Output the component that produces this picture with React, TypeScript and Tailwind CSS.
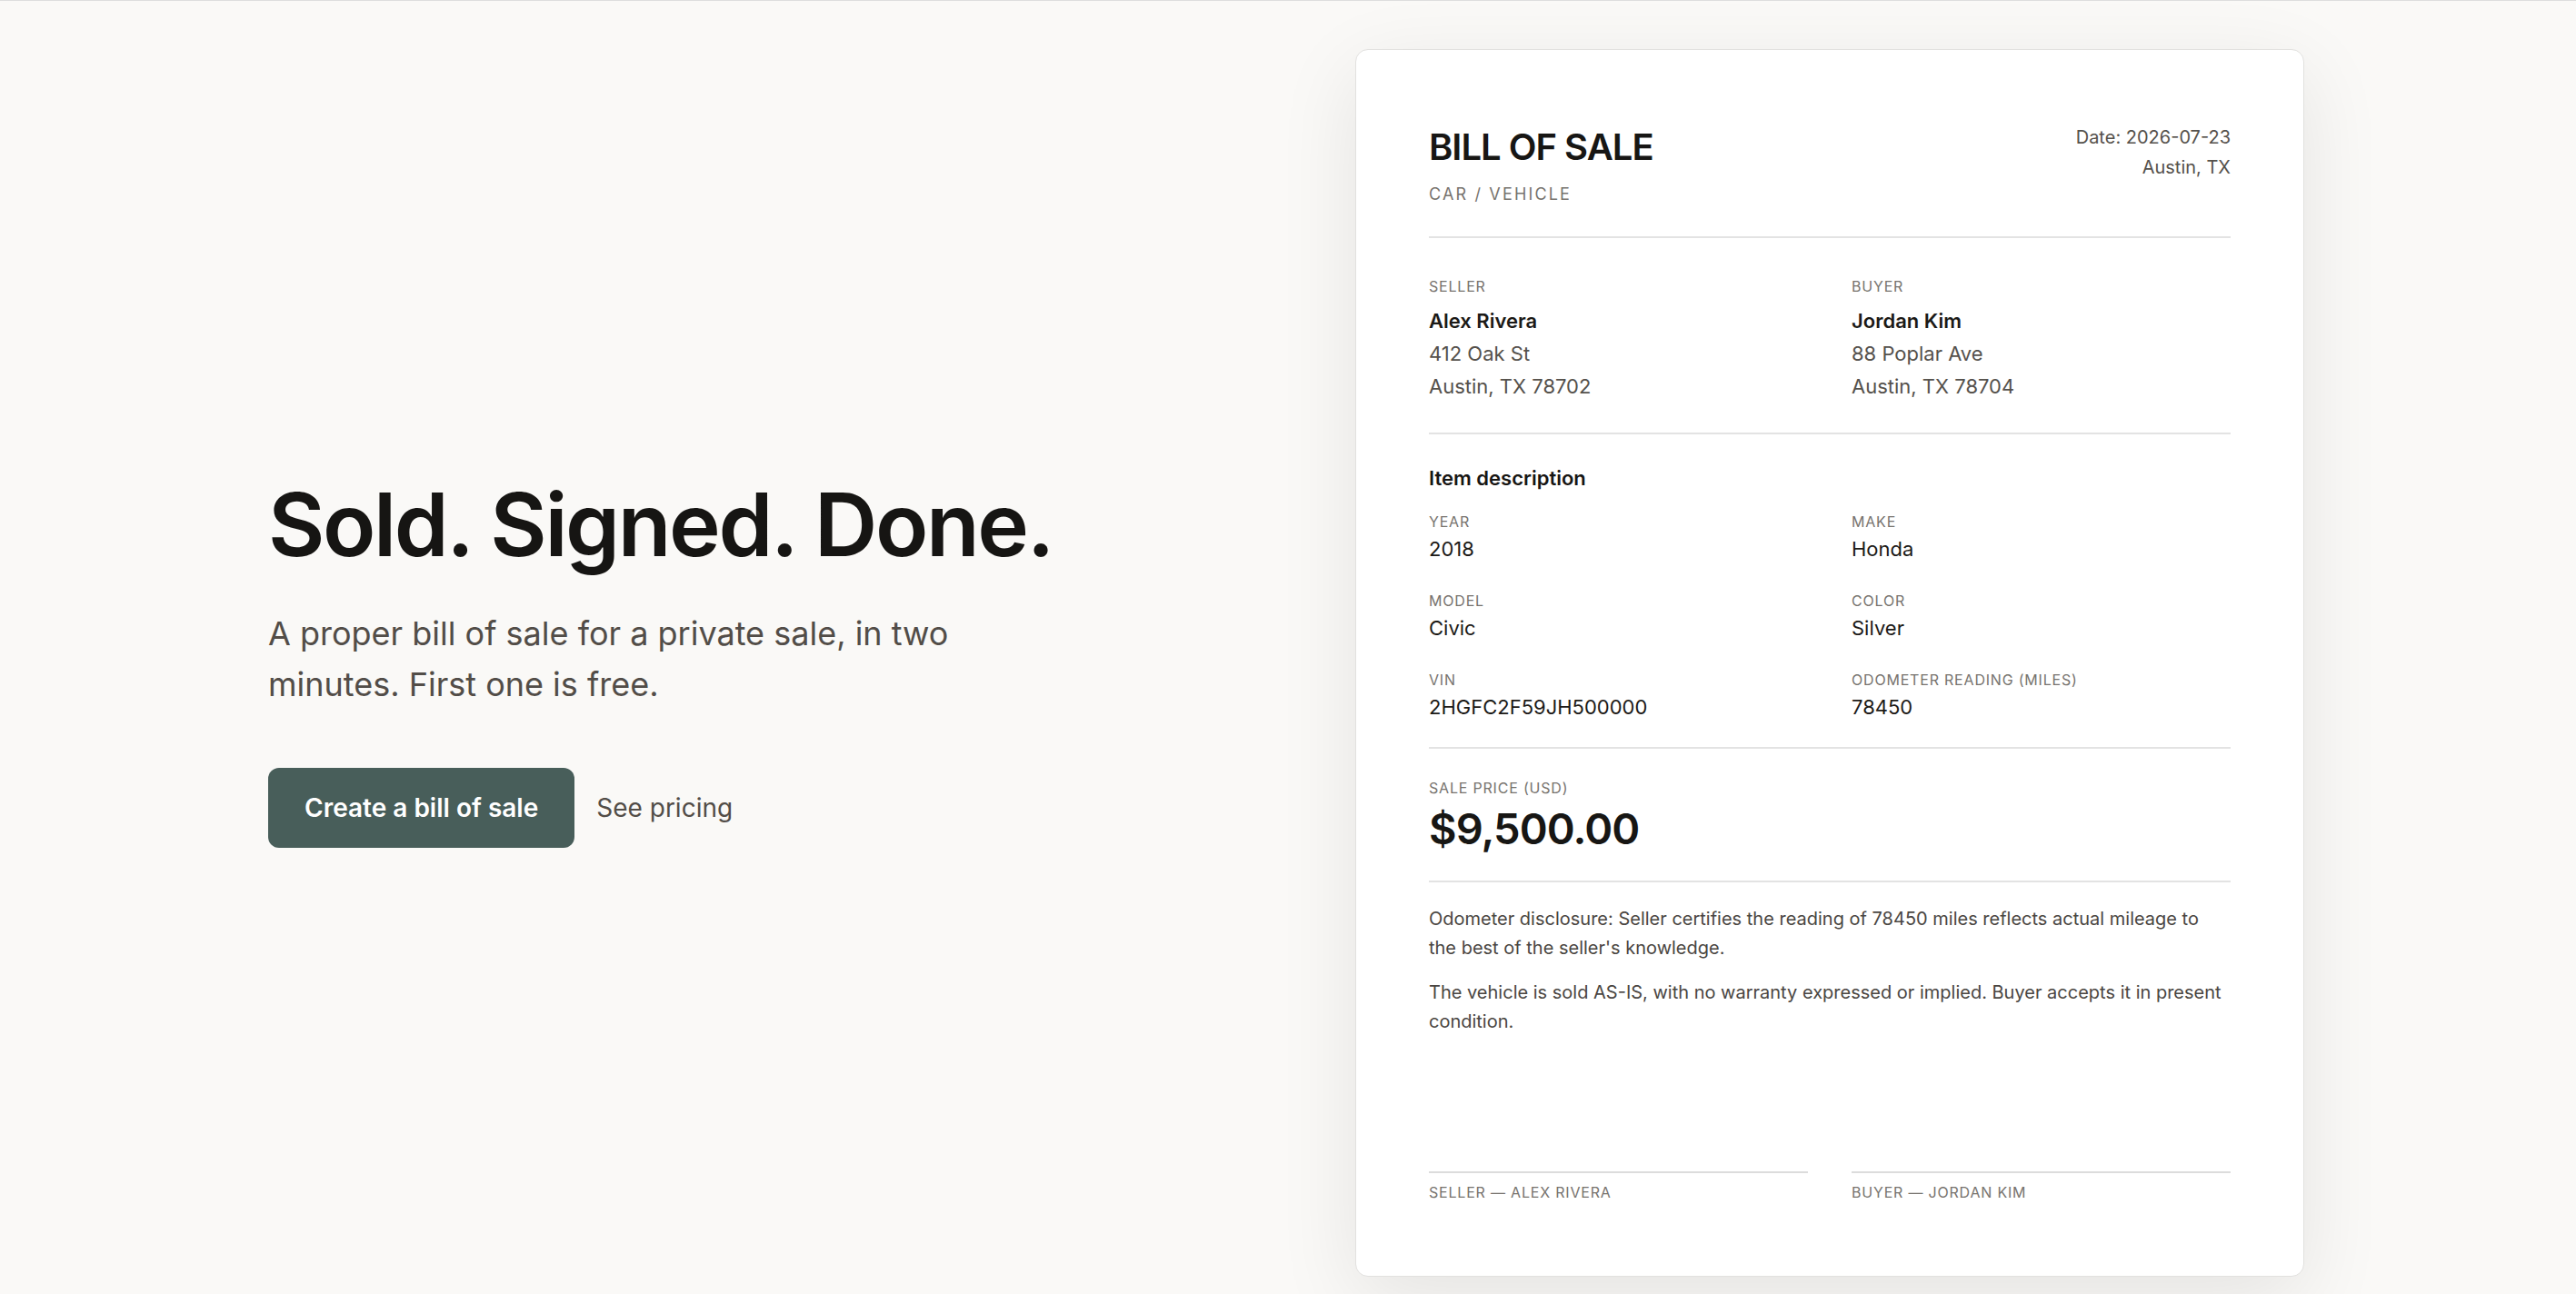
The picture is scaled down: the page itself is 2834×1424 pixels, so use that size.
import React from 'react';

const Label = ({ children }: { children: React.ReactNode }) => (
  <div className="text-[16px] leading-[24px] tracking-[0.05em] uppercase text-[#77736e]">{children}</div>
);

const Field = ({ label, value }: { label: string; value: string }) => (
  <div>
    <Label>{label}</Label>
    <div className="mt-[2px] text-[22px] leading-[32px] text-[#1c1a17]">{value}</div>
  </div>
);

const Party = ({ role, name, street, city }: { role: string; name: string; street: string; city: string }) => (
  <div>
    <Label>{role}</Label>
    <div className="mt-2 text-[22px] leading-[36px]">
      <div className="font-semibold text-[#1c1a17]">{name}</div>
      <div className="text-[#55514c]">{street}</div>
      <div className="text-[#55514c]">{city}</div>
    </div>
  </div>
);

const BillCard = () => {
  return (
    <div className="w-[1044px] shrink-0 aspect-[8.5/11] bg-white border border-[#e2e1df] rounded-[14px] shadow-[0_24px_90px_rgba(0,0,0,0.09)] p-[80px] flex flex-col">
      {/* header */}
      <div className="flex justify-between items-start">
        <div>
          <h2 className="text-[40px] leading-[54px] font-semibold tracking-[-0.025em] text-[#171614]">BILL OF SALE</h2>
          <div className="mt-[11px] text-[18px] leading-[27px] tracking-[0.12em] text-[#77736e]">CAR / VEHICLE</div>
        </div>
        <div className="text-right text-[20px] leading-[33px] text-[#55514c]">
          <div>Date: 2026-07-23</div>
          <div>Austin, TX</div>
        </div>
      </div>

      <div className="mt-[33px] border-t-2 border-[#e3e3e3]" />

      <div className="pt-[41px] pb-[33px] grid grid-cols-2 gap-x-[48px]">
        <Party role="Seller" name="Alex Rivera" street="412 Oak St" city="Austin, TX 78702" />
        <Party role="Buyer" name="Jordan Kim" street="88 Poplar Ave" city="Austin, TX 78704" />
      </div>

      <div className="border-t-2 border-[#e3e3e3]" />

      <div className="pt-[33px] pb-[28px]">
        <div className="text-[22px] leading-[30px] font-semibold text-[#171614]">Item description</div>
        <div className="mt-[21px] grid grid-cols-2 gap-x-[48px] gap-y-[29px]">
          <Field label="Year" value="2018" />
          <Field label="Make" value="Honda" />
          <Field label="Model" value="Civic" />
          <Field label="Color" value="Silver" />
          <Field label="VIN" value="2HGFC2F59JH500000" />
          <Field label="Odometer reading (miles)" value="78450" />
        </div>
      </div>

      <div className="border-t-2 border-[#e3e3e3]" />

      <div className="pt-[31px] pb-[28px]">
        <Label>Sale price (USD)</Label>
        <div className="mt-[4px] text-[47px] leading-[58px] font-semibold tracking-[-0.02em] text-[#171614]">$9,500.00</div>
      </div>

      <div className="border-t-2 border-[#e3e3e3]" />

      <div className="pt-[24px] text-[20px] leading-[32px] text-[#4a4642]">
        <p>Odometer disclosure: Seller certifies the reading of 78450 miles reflects actual mileage to the best of the seller's knowledge.</p>
        <p className="mt-[17px]">The vehicle is sold AS-IS, with no warranty expressed or implied. Buyer accepts it in present condition.</p>
      </div>

      {/* signatures */}
      <div className="mt-auto grid grid-cols-2 gap-x-[48px]">
        <div className="border-t-2 border-[#dcdcdc] pt-[9px]">
          <Label>Seller — Alex Rivera</Label>
        </div>
        <div className="border-t-2 border-[#dcdcdc] pt-[9px]">
          <Label>Buyer — Jordan Kim</Label>
        </div>
      </div>
    </div>
  );
};

const App = () => {
  return (
    <div className="min-h-screen bg-[#faf9f7] border-t border-[#dedede] font-['Inter','Noto_Sans',sans-serif]">
      <div className="pl-[295px] py-[53px] flex items-center">
        <div className="w-[1196px] shrink-0">
          <h1 className="text-[96px] leading-[102px] font-semibold tracking-[-0.025em] text-[#161513]">Sold. Signed. Done.</h1>
          <p className="mt-[41px] max-w-[820px] text-[36px] leading-[56px] text-[#524d48]">
            A proper bill of sale for a private sale, in two minutes. First one is free.
          </p>
          <div className="mt-16 flex items-center gap-[24px]">
            <button className="h-[88px] px-10 rounded-[12px] bg-[#485e5a] text-white text-[28px] font-semibold">
              Create a bill of sale
            </button>
            <a className="text-[28px] text-[#524d48]">See pricing</a>
          </div>
        </div>
        <BillCard />
      </div>
    </div>
  );
};

export default App;
